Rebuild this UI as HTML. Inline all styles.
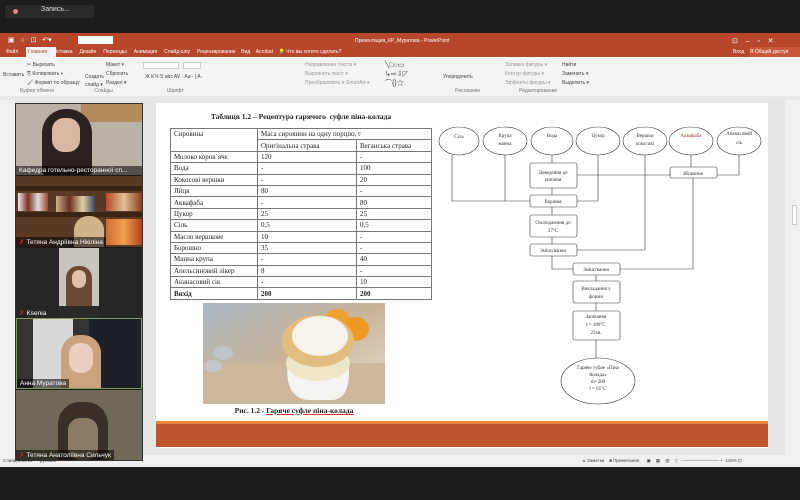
<!DOCTYPE html>
<html><head><meta charset="utf-8"><style>
*{margin:0;padding:0;box-sizing:border-box}
body{width:800px;height:500px;overflow:hidden;background:#1c1c1c;font-family:"Liberation Sans",sans-serif;position:relative}
.a{position:absolute}
.t{font-size:5px;color:#fff;white-space:nowrap}
.r{font-size:5px;color:#444;white-space:nowrap}
table{border-collapse:collapse;font-family:"Liberation Serif",serif;font-size:7px;color:#222}
td{border:1px solid #777;height:11.4px;padding:0 3px;line-height:10px;white-space:nowrap}
.lbl{position:absolute;left:0;bottom:0;background:rgba(0,0,0,.55);color:#fff;font-size:6.5px;padding:1px 3px;white-space:nowrap;overflow:hidden;max-width:126px}
.mic{color:#e02020;margin-right:2px}
</style></head><body>
<div class="a" style="left:5px;top:5px;width:89px;height:13px;background:#2a2a2a;border-radius:2px"></div>
<div class="a" style="left:13px;top:9px;width:5px;height:5px;border-radius:50%;background:#d88"></div>
<div class="a" style="left:41px;top:6px;font-size:7px;color:#ddd">Запись...</div>
<div class="a" style="left:0;top:33px;width:800px;height:24px;background:#b7472a"></div>
<div class="a" style="left:78px;top:36px;width:35px;height:8px;background:#fff"></div>
<div class="a t" style="left:355px;top:38px">Презентация_КР_Муратова - PowerPoint</div>
<div class="a t" style="left:732px;top:37px;font-size:7px">⊡ &nbsp;&nbsp; – &nbsp;&nbsp; ▫ &nbsp;&nbsp; ✕</div>
<div class="a t" style="left:8px;top:36px;font-size:7px">▣ &nbsp;&nbsp;○ &nbsp;&nbsp;⊡ &nbsp;&nbsp;↶▾</div>
<div class="a" style="left:26px;top:47px;width:30px;height:10px;background:#f3f3f3"></div>
<div class="a t" style="left:6px;top:49px">Файл &nbsp;&nbsp;&nbsp;&nbsp;&nbsp;&nbsp;<span style="color:#b7472a">Главная</span> &nbsp;&nbsp;&nbsp;&nbsp;Вставка &nbsp;&nbsp;&nbsp;&nbsp;Дизайн &nbsp;&nbsp;&nbsp;&nbsp;Переходы &nbsp;&nbsp;&nbsp;&nbsp;Анимация &nbsp;&nbsp;&nbsp;&nbsp;Слайд-шоу &nbsp;&nbsp;&nbsp;&nbsp;Рецензирование &nbsp;&nbsp;&nbsp;Вид &nbsp;&nbsp;&nbsp;Acrobat &nbsp;&nbsp;&nbsp;💡 Что вы хотите сделать?</div>
<div class="a" style="left:750px;top:47px;width:50px;height:10px;background:#c8583a"></div>
<div class="a t" style="left:733px;top:49px">Вход &nbsp;&nbsp;&nbsp;Я Общий доступ</div>
<div class="a" style="left:0;top:57px;width:800px;height:40px;background:#f3f3f3"></div>
<div class="a" style="left:0;top:96px;width:800px;height:4px;background:#e8e8e8"></div>
<div class="a" style="left:143px;top:62px;width:36px;height:7px;background:#fff;border:1px solid #ccc"></div>
<div class="a" style="left:183px;top:62px;width:18px;height:7px;background:#fff;border:1px solid #ccc"></div>
<div class="a r" style="left:3px;top:72px">Вставить</div>
<div class="a r" style="left:27px;top:61px;line-height:9px">✂ Вырезать<br>⎘ Копировать ▾<br>🖌 Формат по образцу</div>
<div class="a r" style="left:85px;top:73px;line-height:8px">Создать<br>слайд ▾</div>
<div class="a r" style="left:106px;top:61px;line-height:9px">Макет ▾<br>Сбросить<br>Раздел ▾</div>
<div class="a r" style="left:145px;top:74px">Ж К Ч S abc AV · Aa · | A ·</div>
<div class="a r" style="left:305px;top:61px;line-height:9px;color:#999">Направление текста ▾<br>Выровнять текст ▾<br>Преобразовать в SmartArt ▾</div>
<div class="a r" style="left:385px;top:61px;line-height:9px;font-size:7px">╲□○▭<br>↳⇨⇩◸<br>⌒{}☆</div>
<div class="a r" style="left:443px;top:74px">Упорядочить</div>
<div class="a r" style="left:505px;top:61px;line-height:9px;color:#999">Заливка фигуры ▾<br>Контур фигуры ▾<br>Эффекты фигуры ▾</div>
<div class="a r" style="left:562px;top:61px;line-height:9px">Найти<br>Заменить ▾<br>Выделить ▾</div>
<div class="a r" style="left:20px;top:88px;color:#777">Буфер обмена &nbsp;&nbsp;&nbsp;&nbsp;&nbsp;&nbsp;&nbsp;&nbsp;&nbsp;&nbsp;&nbsp;&nbsp;&nbsp;&nbsp;&nbsp;&nbsp;&nbsp;&nbsp;&nbsp;&nbsp;&nbsp;&nbsp;&nbsp;&nbsp;&nbsp;&nbsp;&nbsp;&nbsp;Слайды &nbsp;&nbsp;&nbsp;&nbsp;&nbsp;&nbsp;&nbsp;&nbsp;&nbsp;&nbsp;&nbsp;&nbsp;&nbsp;&nbsp;&nbsp;&nbsp;&nbsp;&nbsp;&nbsp;&nbsp;&nbsp;&nbsp;&nbsp;&nbsp;&nbsp;&nbsp;&nbsp;&nbsp;&nbsp;&nbsp;&nbsp;&nbsp;&nbsp;&nbsp;&nbsp;&nbsp;&nbsp;&nbsp;Шрифт</div>
<div class="a r" style="left:455px;top:88px;color:#777">Рисование &nbsp;&nbsp;&nbsp;&nbsp;&nbsp;&nbsp;&nbsp;&nbsp;&nbsp;&nbsp;&nbsp;&nbsp;&nbsp;&nbsp;&nbsp;&nbsp;&nbsp;&nbsp;&nbsp;&nbsp;&nbsp;&nbsp;&nbsp;&nbsp;&nbsp;&nbsp;&nbsp;Редактирование</div>
<div class="a" style="left:0;top:100px;width:800px;height:355px;background:#e6e6e6"></div>
<div class="a" style="left:0;top:100px;width:15px;height:355px;background:#f0f0f0"></div>
<div class="a" style="left:785px;top:100px;width:15px;height:355px;background:#f0f0f0"></div>
<div class="a" style="left:792px;top:205px;width:5px;height:20px;background:#fff;border:1px solid #ccc"></div>
<div class="a" style="left:0;top:455px;width:800px;height:12px;background:#f0f0f0"></div>
<div class="a r" style="left:3px;top:458px;font-size:4.5px">Слайд 6 из 16 &nbsp;&nbsp;&nbsp;&nbsp; русский</div>
<div class="a r" style="left:582px;top:458px;font-size:4.5px">≐ Заметки &nbsp;&nbsp;&nbsp;■ Примечания &nbsp;&nbsp;&nbsp;&nbsp;&nbsp;▣ &nbsp;&nbsp;&nbsp;▦ &nbsp;&nbsp;&nbsp;▥ &nbsp;&nbsp;&nbsp;▽ &nbsp;- ———————— + &nbsp;115% ⊡</div>
<div class="a" style="left:156px;top:103px;width:612px;height:345px;background:#fff"></div>
<div class="a" style="left:156px;top:421px;width:612px;height:3px;background:#e8843a"></div>
<div class="a" style="left:156px;top:424px;width:612px;height:23px;background:#c0552b"></div>
<div class="a" style="left:170px;top:112px;width:262px;text-align:center;font-family:'Liberation Serif',serif;font-weight:bold;font-size:7.5px;color:#222">Таблиця 1.2 – Рецептура гарячого &nbsp;суфле піна-колада</div>
<table class="a" style="left:170px;top:128px;width:262px">
<tr><td rowspan="2" style="width:87px;vertical-align:top">Сировина</td><td colspan="2">Маса сировини на одну порцію, г</td></tr>
<tr><td style="width:99px">Оригінальна страва</td><td>Веганська страва</td></tr>
<tr><td>Молоко коров`яче</td><td>120</td><td>-</td></tr>
<tr><td>Вода</td><td>-</td><td>100</td></tr>
<tr><td>Кокосові вершки</td><td>-</td><td>20</td></tr>
<tr><td>Яйця</td><td>80</td><td>-</td></tr>
<tr><td>Аквафаба</td><td>-</td><td>80</td></tr>
<tr><td>Цукор</td><td>25</td><td>25</td></tr>
<tr><td>Сіль</td><td>0,5</td><td>0,5</td></tr>
<tr><td>Масло вершкове</td><td>10</td><td>-</td></tr>
<tr><td>Борошно</td><td>35</td><td>-</td></tr>
<tr><td>Манна крупа</td><td>-</td><td>40</td></tr>
<tr><td>Апельсиновий лікер</td><td>8</td><td>-</td></tr>
<tr><td>Ананасовий сік</td><td>-</td><td>10</td></tr>
<tr style="font-weight:bold"><td>Вихід</td><td>200</td><td>200</td></tr>
</table>
<svg class="a" style="left:203px;top:303px" width="182" height="101" viewBox="0 0 182 101">
<defs><linearGradient id="bg" x1="0" y1="0" x2="1" y2="1"><stop offset="0" stop-color="#a9b7c2"/><stop offset=".5" stop-color="#c9b49a"/><stop offset="1" stop-color="#e9dfd3"/></linearGradient></defs>
<rect width="182" height="101" fill="url(#bg)"/>
<rect y="60" width="182" height="41" fill="#cdb89d"/>
<ellipse cx="134" cy="16" rx="12" ry="10" fill="#f0a030"/>
<ellipse cx="152" cy="26" rx="14" ry="12" fill="#ee9a22"/>
<ellipse cx="20" cy="50" rx="10" ry="7" fill="#bfc4c8"/>
<ellipse cx="10" cy="63" rx="9" ry="6" fill="#c4c8cc"/>
<path d="M85 55 Q80 95 105 97 L130 97 Q150 95 145 55 Z" fill="#f4f4f2"/>
<ellipse cx="115" cy="60" rx="32" ry="18" fill="#eee6c8"/>
<ellipse cx="115" cy="38" rx="36" ry="26" fill="#e2bd80"/>
<ellipse cx="117" cy="33" rx="28" ry="20" fill="#f6f2ec"/>
</svg>
<div class="a" style="left:203px;top:406px;width:182px;text-align:center;font-family:'Liberation Serif',serif;font-weight:bold;font-size:7.5px;color:#222">Рис. 1.2 - <u style="text-decoration-color:#d33">Гаряче суфле піна-колада</u></div>
<svg class="a" style="left:436px;top:120px" width="340" height="300" viewBox="436 120 340 300" font-family="Liberation Serif,serif" font-size="5" fill="none" stroke="#333" stroke-width=".6">
<g fill="#fff">
<ellipse cx="459" cy="141" rx="20" ry="14"/>
<ellipse cx="505" cy="141" rx="22" ry="14"/>
<ellipse cx="552" cy="141" rx="21" ry="14"/>
<ellipse cx="598" cy="141" rx="22" ry="14"/>
<ellipse cx="645" cy="141" rx="22" ry="14"/>
<ellipse cx="691" cy="141" rx="22" ry="14"/>
<ellipse cx="739" cy="141" rx="22" ry="14"/>
<rect x="530" y="163" width="47" height="25" rx="2"/>
<rect x="670" y="167" width="47" height="11" rx="2"/>
<rect x="530" y="195" width="47" height="12" rx="2"/>
<rect x="530" y="215" width="47" height="22" rx="2"/>
<rect x="530" y="244" width="47" height="12" rx="2"/>
<rect x="573" y="263" width="47" height="12" rx="2"/>
<rect x="573" y="281" width="47" height="22" rx="2"/>
<rect x="573" y="311" width="47" height="29" rx="2"/>
<ellipse cx="598" cy="381" rx="37" ry="23"/>
</g>
<path d="M452 155V201H530M505 155V201M552 155V163M552 188V195M598 155V201H577M552 207V215M552 237V244M577 175H670M691 155V167M739 155V175H717M645 155V250H577M552 256V269H573M693 178V269H620M596 275V281M596 303V311M596 340V358"/>
<g fill="#333" stroke="none" text-anchor="middle">
<text x="459" y="138">Сіль</text>
<text x="505" y="137">Крупа</text><text x="505" y="145">манна</text>
<text x="552" y="137">Вода</text>
<text x="598" y="137">Цукор</text>
<text x="645" y="137">Вершки</text><text x="645" y="145">кокосові</text>
<text x="691" y="137" fill="#933">Аквафаба</text>
<text x="739" y="135">Ананасовий</text><text x="739" y="144">сік</text>
<text x="553" y="174">Доведення до</text><text x="553" y="181">кипіння</text>
<text x="693" y="175">Збивання</text>
<text x="553" y="203">Варіння</text>
<text x="553" y="224">Охолодження до</text><text x="553" y="232">37°С</text>
<text x="553" y="252">Змішування</text>
<text x="596" y="271">Змішування</text>
<text x="596" y="290">Викладання у</text><text x="596" y="298">форми</text>
<text x="596" y="318">Запікання</text><text x="596" y="326">t = 180°С</text><text x="596" y="334">25хв.</text>
<text x="598" y="369">Гаряче суфле «Піна</text><text x="598" y="376">Колада»</text><text x="598" y="383">m=200</text><text x="598" y="390">t = 65°С</text>
</g>
</svg>
<div class="a" style="left:15px;top:103px;width:128px;height:358px;background:#1a1a1a;border:1px solid #333"></div>
<div class="a" style="left:16px;top:104px;width:126px;height:71px;background:#b9b2a6;overflow:hidden">
 <div class="a" style="left:65px;top:0;width:61px;height:18px;background:#b48c5c"></div>
 <div class="a" style="left:26px;top:5px;width:50px;height:66px;border-radius:24px 24px 4px 4px;background:#2b2220"></div>
 <div class="a" style="left:36px;top:14px;width:28px;height:34px;border-radius:12px;background:#d8b7a5"></div>
 <div class="lbl" style="width:126px">Кафедра готельно-ресторанної сп...</div>
</div>
<div class="a" style="left:16px;top:176px;width:126px;height:71px;background:#5a3a25;overflow:hidden">
 <div class="a" style="left:0;top:10px;width:126px;height:5px;background:#3a2414"></div>
 <div class="a" style="left:0;top:36px;width:126px;height:5px;background:#3a2414"></div>
 <div class="a" style="left:2px;top:17px;width:30px;height:18px;background:linear-gradient(90deg,#eee,#7a3020,#ddd,#a04830)"></div>
 <div class="a" style="left:40px;top:20px;width:40px;height:16px;background:linear-gradient(90deg,#c9b28a,#6a2e20,#e0d0a8,#3a3a5a)"></div>
 <div class="a" style="left:90px;top:17px;width:36px;height:18px;background:linear-gradient(90deg,#b84a2a,#e0c090,#8a3a20)"></div>
 <div class="a" style="left:90px;top:43px;width:36px;height:26px;background:linear-gradient(90deg,#d06a30,#f0a050,#b04020)"></div>
 <div class="a" style="left:58px;top:40px;width:30px;height:31px;border-radius:14px 14px 0 0;background:#d2b48c"></div>
 <div class="lbl"><span class="mic">✗</span>Тетяна Андріївна Нікіліна</div>
</div>
<div class="a" style="left:16px;top:248px;width:126px;height:70px;background:#262626;overflow:hidden">
 <div class="a" style="left:43px;top:0;width:40px;height:70px;background:#c8c4be"></div>
 <div class="a" style="left:50px;top:18px;width:26px;height:40px;border-radius:12px 12px 0 0;background:#6a4a35"></div>
 <div class="a" style="left:56px;top:22px;width:14px;height:18px;border-radius:7px;background:#e0c0a8"></div>
 <div class="a" style="left:43px;top:58px;width:40px;height:12px;background:#2a2a2a"></div>
 <div class="lbl" style="background:none"><span class="mic">✗</span>Ksenia</div>
</div>
<div class="a" style="left:16px;top:318px;width:126px;height:71px;border:1px solid #7f9a5a;background:#333;overflow:hidden">
 <div class="a" style="left:16px;top:0;width:40px;height:70px;background:#d8d8d8"></div>
 <div class="a" style="left:72px;top:0;width:54px;height:70px;background:#1c1f26"></div>
 <div class="a" style="left:44px;top:16px;width:40px;height:55px;border-radius:18px 18px 0 0;background:#caa27e"></div>
 <div class="a" style="left:52px;top:24px;width:24px;height:30px;border-radius:11px;background:#eacfc0"></div>
 <div class="lbl">Анна Муратова</div>
</div>
<div class="a" style="left:16px;top:390px;width:126px;height:70px;background:#6f6a58;overflow:hidden">
 <div class="a" style="left:42px;top:12px;width:50px;height:60px;border-radius:22px 22px 0 0;background:#3a3028"></div>
 <div class="a" style="left:52px;top:28px;width:30px;height:42px;border-radius:12px;background:#8a7a66"></div>
 <div class="lbl"><span class="mic">✗</span>Тетяна Анатоліївна Сильчук</div>
</div>
</body></html>
